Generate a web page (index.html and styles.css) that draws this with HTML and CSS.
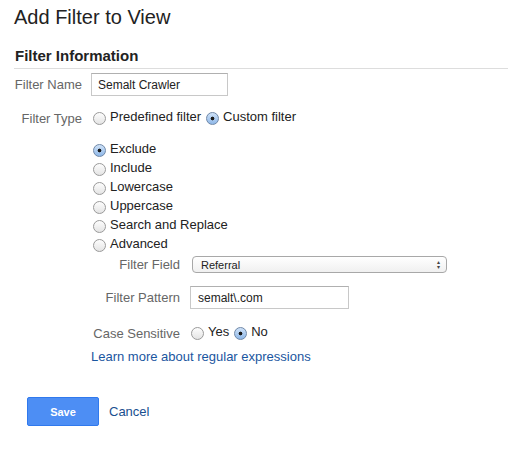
FILE: index.html
```html
<!DOCTYPE html>
<html>
<head>
<meta charset="utf-8">
<link rel="stylesheet" href="styles.css">
</head>
<body>
<div class="page">
  <h1 class="title">Add Filter to View</h1>
  <h2 class="section">Filter Information</h2>
  <div class="rows">
    <div class="row row-name">
      <label class="lbl">Filter Name</label>
      <input class="text name-input" type="text" value="Semalt Crawler">
    </div>
    <div class="row row-type">
      <span class="lbl">Filter Type</span>
      <div class="inline-radios">
        <label class="opt"><span class="radio"></span>Predefined filter</label>
        <label class="opt"><span class="radio on"></span>Custom filter</label>
      </div>
    </div>
    <div class="custom">
      <div class="opts">
        <label class="opt"><span class="radio on"></span>Exclude</label>
        <label class="opt"><span class="radio"></span>Include</label>
        <label class="opt"><span class="radio"></span>Lowercase</label>
        <label class="opt"><span class="radio"></span>Uppercase</label>
        <label class="opt"><span class="radio"></span>Search and Replace</label>
        <label class="opt"><span class="radio"></span>Advanced</label>
      </div>
      <div class="sub">
        <div class="srow srow-field">
          <span class="slbl">Filter Field</span>
          <div class="select"><span>Referral</span><span class="arrows">&#x25B4;<br>&#x25BE;</span></div>
        </div>
        <div class="srow srow-pattern">
          <span class="slbl">Filter Pattern</span>
          <input class="text pattern-input" type="text" value="semalt\.com">
        </div>
        <div class="srow srow-case">
          <span class="slbl">Case Sensitive</span>
          <div class="inline-radios">
            <label class="opt"><span class="radio"></span>Yes</label>
            <label class="opt"><span class="radio on"></span>No</label>
          </div>
        </div>
      </div>
      <a class="link" href="#">Learn more about regular expressions</a>
    </div>
  </div>
  <div class="actions">
    <button class="save">Save</button>
    <a class="cancel" href="#">Cancel</a>
  </div>
</div>
</body>
</html>
```
FILE: styles.css
```css
* { box-sizing: border-box; }
body {
  margin: 0;
  background: #fff;
  font-family: "Liberation Sans", Arial, sans-serif;
  color: #222;
}
.page { padding: 4px 0 0 14px; }
.title {
  margin: 0;
  font-size: 20px;
  font-weight: normal;
  line-height: 26px;
  color: #222;
}
.section {
  margin: 17px 0 0 0;
  font-size: 15px;
  font-weight: bold;
  line-height: 18px;
  color: #222;
  border-bottom: 1px solid #ddd;
  padding: 0 0 3px 1px;
}
.rows { padding-top: 4px; }
.row { display: flex; align-items: center; }
.lbl {
  width: 68px;
  text-align: right;
  font-size: 13px;
  color: #666;
  margin-right: 9px;
  white-space: nowrap;
}
.text {
  font-family: "Liberation Sans", Arial, sans-serif;
  font-size: 12px;
  color: #222;
  height: 23px;
  border: 1px solid #c8c8c8;
  border-top-color: #b0b0b0;
  padding: 0 6px;
  outline: none;
}
.name-input { width: 137px; }
.row-type { margin-top: 13px; }
.inline-radios { display: flex; gap: 3px; }
.opt {
  display: flex;
  align-items: center;
  font-size: 13px;
  color: #222;
  line-height: 19px;
  white-space: nowrap;
}
.inline-radios .opt { position: relative; top: -2px; }
.radio {
  width: 13px;
  height: 13px;
  border-radius: 50%;
  border: 1px solid #9a9a9a;
  background: linear-gradient(#fdfdfd, #e4e4e4);
  margin: 0 4px 0 2px;
  position: relative;
  top: 2px;
  flex: none;
  display: inline-block;
}
.radio.on {
  border-color: #6f88a8;
  background: radial-gradient(circle at 50% 50%, #1b1b1b 0 1.6px, transparent 2.2px), linear-gradient(#cfe2f8, #8fb8e8);
}
.custom { padding-left: 77px; margin-top: 11px; }
.opts { display: flex; flex-direction: column; }
.sub { margin-top: 3px; }
.srow { display: flex; align-items: center; }
.slbl {
  width: 89px;
  text-align: right;
  font-size: 13px;
  color: #666;
  margin-right: 10px;
  white-space: nowrap;
}
.srow-field { margin-top: 3px; }
.select {
  width: 255px;
  height: 17px;
  border: 1px solid #a8a8a8;
  border-radius: 4px;
  background: linear-gradient(#ffffff, #f0f0f0);
  display: flex;
  align-items: center;
  justify-content: space-between;
  padding: 0 6px 0 8px;
  font-size: 11px;
  color: #222;
  margin-left: 2px;
}
.arrows {
  font-size: 6px;
  line-height: 5px;
  color: #444;
  text-align: center;
}
.srow-pattern { margin-top: 13px; }
.pattern-input { width: 159px; height: 23px; padding: 0 7px; font-size: 12px; }
.srow-case { margin-top: 15px; }
.srow-case .slbl { margin-right: 9px; }
.link {
  display: block;
  margin-top: 6px;
  font-size: 13px;
  color: #1a56a0;
  text-decoration: none;
  line-height: 16px;
}
.actions {
  display: flex;
  align-items: center;
  margin-top: 32px;
  padding-left: 13px;
}
.save {
  width: 72px;
  height: 29px;
  border: 1px solid #3079ed;
  border-radius: 2px;
  background: #4d8ef4;
  color: #fff;
  font-family: "Liberation Sans", Arial, sans-serif;
  font-weight: bold;
  font-size: 11px;
}
.cancel {
  margin-left: 10px;
  font-size: 13px;
  color: #1a4f8f;
  text-decoration: none;
}
```
